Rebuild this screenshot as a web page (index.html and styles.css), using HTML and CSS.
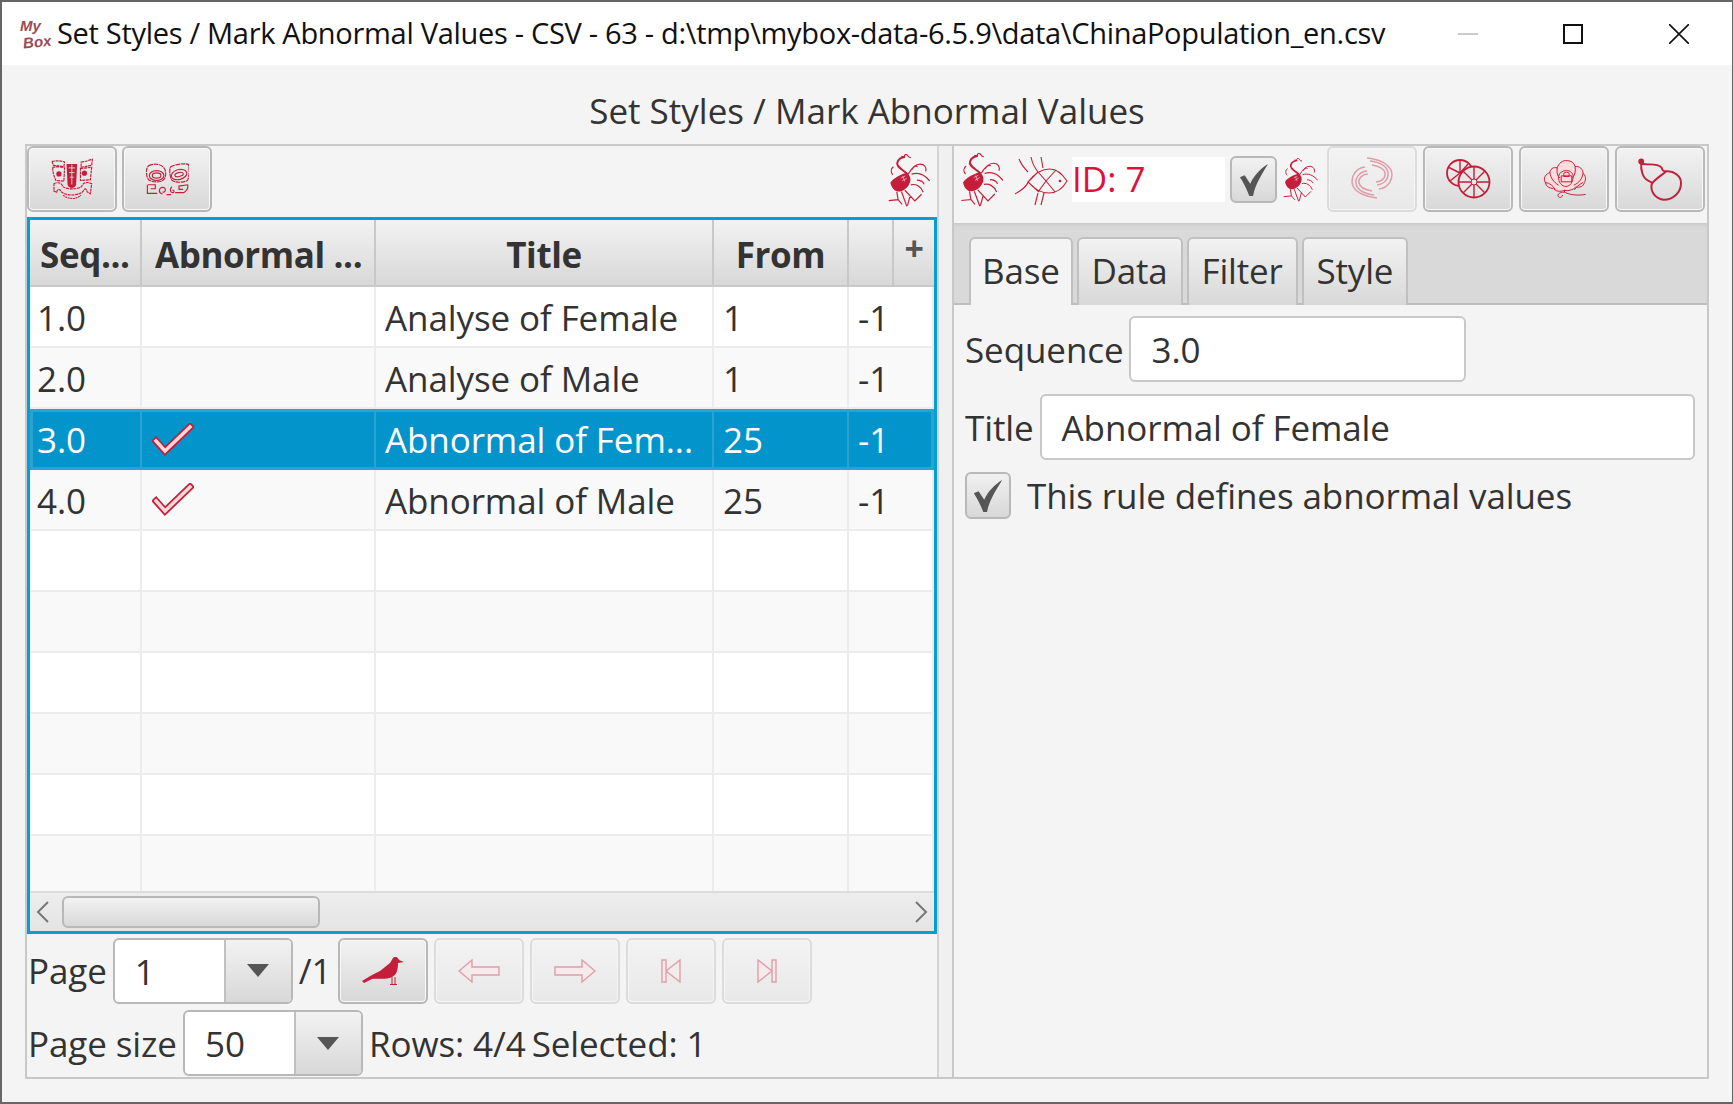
FILE: index.html
```html
<!DOCTYPE html>
<html lang="en">
<head>
	<meta charset="UTF-8">
	<title>Set Styles / Mark Abnormal Values</title>
	<link rel="stylesheet" href="styles.css">
</head>
<body>
<svg class="defs" width="0" height="0">
	<defs>
		<symbol id="i-phoenix" viewBox="0 0 125 158">
			<path d="M7 86C14 74 34 62 56 56c10 8 14 20 8 32-6 14-20 24-32 24-14 0-22-12-25-26z" fill="#c41e3a"/>
			<path d="M58 60C44 46 22 38 28 24c3-8 12-14 22-15" fill="none" stroke="#c41e3a" stroke-width="6"/>
			<path d="M38 72l14-7M42 80l14-8M44 66l6 16" stroke="#f6d5da" stroke-width="2" fill="none"/>
			<path d="M50 9c-3-6 2-9 6-7 5 3 3 8 12 9M50 9l-10-2M60 60c8-14 18-30 36-30 12 0 20 10 16 22M70 60c18-6 38 0 54 20M72 46c4-8 10-12 16-8M68 92c14-4 30 4 37 22M86 78c8 0 18 4 22 12M14 62C8 54 8 44 16 38M40 112l16 44M50 108l30 32 20-20M66 124l-8 30M26 112l4 24-28 3M30 136l12 14" fill="none" stroke="#c41e3a" stroke-width="3.500"/>
		</symbol>
		<symbol id="i-fish" viewBox="0 0 54 50">
			<path d="M14 26c6-8 13-13 22-13 7 0 13 6 17 12-4 7-10 12-18 12-8 0-15-4-21-11zM14 26l10-10M14 26l11 10M24 16l8 9-8 11M32 25l10-11M32 25l9 11M1 38c7-4 12-8 13-12M5 3c2 5 5 9 9 13M17 1c1 5 3 10 7 15M27 1l2 11M21 49c1-4 2-8 3-12M27 49l3-12" fill="none" stroke="#c41e3a" stroke-width="1.100"/>
			<circle cx="46" cy="25" r="1.300" fill="#c41e3a"/>
		</symbol>
		<symbol id="i-mask" viewBox="0 0 125 130">
			<path d="M46 18h32l-3 62c-2 14-24 14-26 0z" fill="#c41e3a"/>
			<path d="M52 30h20M54 44h16M56 58h12M62 20v60" stroke="#f1c6cc" stroke-width="3" fill="none"/>
			<path d="M2 10c12-2 26-2 38 2l-2 14-32-4zM90 12c12 0 24-6 34-8l-2 18-32 6zM4 28c10-2 28-2 36 2l-2 40-24-2C8 56 4 42 4 28zM88 32l34-4-4 38-30 2zM8 78c10-6 24-4 26 8 12 10 44 10 58 0 4-14 20-14 30-8l-4 30-10-6c-2-10-6-10-10-6-4 20-64 22-72 0-6-2-8 0-10 8l-8-4z" fill="none" stroke="#c41e3a" stroke-width="3.500" stroke-dasharray="9 2"/>
			<circle cx="23" cy="48" r="8" fill="#c41e3a"/>
			<circle cx="100" cy="46" r="8" fill="#c41e3a"/>
			<path d="M36 112c14 14 40 14 54 0" fill="none" stroke="#c41e3a" stroke-width="3.500" stroke-dasharray="6 2"/>
		</symbol>
		<symbol id="i-eyes" viewBox="0 0 130 100">
			<path d="M8 8C24 0 52 2 58 22c4 16 0 30-14 34-14 2-32 2-38-8C0 36-2 18 8 8zM74 12c14-8 40-12 54-8 4 18 4 40-4 50-14 6-36 6-46-2-6-12-8-30-4-40z" fill="none" stroke="#c41e3a" stroke-width="3.500" stroke-dasharray="14 2"/>
			<ellipse cx="32" cy="38" rx="22" ry="15" fill="none" stroke="#c41e3a" stroke-width="3.500"/>
			<ellipse cx="32" cy="38" rx="13" ry="8" fill="none" stroke="#c41e3a" stroke-width="3.500"/>
			<ellipse cx="100" cy="35" rx="24" ry="15" fill="none" stroke="#c41e3a" stroke-width="3.500" transform="rotate(-15 100 35)"/>
			<ellipse cx="100" cy="35" rx="13" ry="6" fill="none" stroke="#c41e3a" stroke-width="3.500" transform="rotate(-15 100 35)"/>
			<path d="M6 66h22v12H14M4 66v26h30M50 94c-14-2-12-22 2-20 10 2 8 16-2 14M62 96h14M78 72c-6 6-6 16 2 18 6 0 6-8 0-8M88 90h26c10-6 14-16 12-24l-26 4v10h12" fill="none" stroke="#c41e3a" stroke-width="3.500"/>
		</symbol>
		<symbol id="i-swirl" viewBox="0 0 44 44">
			<path d="M17 1c10 1 20 5 24 12 3 8-2 18-12 19M20 4c8 1 16 4 18 11 1 6-3 12-11 13M22 8c6 1 12 3 13 8 1 5-4 9-9 9M27 41C17 40 6 36 3 29c-3-8 2-18 12-19M24 38c-8-1-16-4-18-11-1-6 3-12 11-13M22 34c-6-1-12-3-13-8-1-5 4-9 9-9" fill="none" stroke="#c41e3a" stroke-width="1.500"/>
		</symbol>
		<symbol id="i-lotus" viewBox="0 0 46 40">
			<circle cx="15" cy="14" r="13" fill="none" stroke="#c41e3a" stroke-width="1.800"/>
			<path d="M15 14V1M15 14L3 8M15 14L5 22M15 14l8-9" stroke="#c41e3a" stroke-width="1.400"/>
			<circle cx="29" cy="23" r="15.500" fill="#e6e6e6" stroke="#c41e3a" stroke-width="1.800"/>
			<path d="M29 8v30M14 23h30M18 12l22 22M40 12L18 34" stroke="#c41e3a" stroke-width="1.400"/>
			<circle cx="29" cy="23" r="3" fill="#e6e6e6" stroke="#c41e3a"/>
		</symbol>
		<symbol id="i-peony" viewBox="0 0 133 122">
			<path d="M10 70c-8-14 2-26 14-30 0-10 10-18 22-14 4-14 16-24 30-22 12 0 22 6 24 18 14-2 24 8 24 20 8 6 10 20 4 28-2 12-14 16-26 14-8 8-20 12-34 10-12 4-26 4-34-6-12 0-22-6-24-18z" fill="#fcdcdc" stroke="#c41e3a" stroke-width="3"/>
			<path d="M46 26c-2 14 0 24 8 30M100 22c2 14 0 26-8 34M24 40c2 16 12 30 26 38M124 42c-2 16-12 30-28 36M50 52c2-12 12-18 24-18 12 0 20 8 20 18 0 16-8 30-22 30-12 0-24-14-22-30zM58 50h32v18H58zM66 42c4-4 12-4 16 0v10H66zM10 70c14 2 24 10 30 22M124 70c-12 6-20 14-26 22M68 92v8c-8-2-20 2-20 10 2 8 14 6 14-2M70 100c14 8 40 10 62 6" fill="none" stroke="#c41e3a" stroke-width="3"/>
		</symbol>
		<symbol id="i-gourd" viewBox="0 0 136 136">
			<circle cx="10" cy="14" r="9" fill="#c41e3a"/>
			<path d="M10 20c15 8 45-5 62 12 6 8 0 13 16 12 22-2 45 14 45 36 0 30-25 52-53 52-25-2-42-24-38-47 4-5 0-7-12-13C15 65 8 40 10 20zM42 85c6-14 28-26 46-41" fill="none" stroke="#c41e3a" stroke-width="6"/>
		</symbol>
		<symbol id="i-crow" viewBox="0 0 43 28">
			<path d="M0 24l10-6 8-4 10-8 3-5c2-2 5-1 6 2l5 2-6 1c0 6-1 12-6 14-6 3-14 1-20 2L2 26z" fill="#c41e3a"/>
			<path d="M30 20v8M33 20v8M28 27.500h7" stroke="#c41e3a" stroke-width="1" fill="none"/>
		</symbol>
		<symbol id="i-check" viewBox="0 0 42 33">
			<path d="M4 18l9 10L38 4" fill="none" stroke="#c41e3a" stroke-width="7" stroke-linecap="square" stroke-linejoin="miter"/>
			<path d="M4 18l9 10L38 4" fill="none" stroke="#fad6d6" stroke-width="3.500" stroke-linecap="square" stroke-linejoin="miter"/>
		</symbol>
		<symbol id="i-tick" viewBox="0 0 32 36">
			<path d="M1 15l5-2 6 9C16 13 23 6 31 1c-6 10-14 22-16 34h-4C8 27 5 21 1 15z" fill="#555"/>
		</symbol>
		<symbol id="i-left" viewBox="0 0 42 24">
			<path d="M1 12L14 1v7h27v8H14v7z" fill="#fbdcdc" stroke="#c41e3a" stroke-width="1.400"/>
		</symbol>
		<symbol id="i-first" viewBox="0 0 20 24">
			<path d="M1 1h4v22H1zM19 1v22L5 12z" fill="#fbdcdc" stroke="#c41e3a" stroke-width="1.400"/>
		</symbol>
	</defs>
</svg>
<div class="window">
	<!--title bar-->
	<div class="titlebar">
		<div class="logo"><span>My</span><span class="logo-box">Box</span></div>
		<div class="wintitle">Set Styles / Mark Abnormal Values - CSV - 63 - d:\tmp\mybox-data-6.5.9\data\ChinaPopulation_en.csv</div>
		<div class="winbtns">
			<div class="win-min"></div>
			<div class="win-max"></div>
			<svg class="win-close" width="20" height="20" viewBox="0 0 20 20"><path d="M0 0l20 20M20 0L0 20" stroke="#111" stroke-width="1.600"/></svg>
		</div>
	</div>
	<div class="heading">Set Styles / Mark Abnormal Values</div>

	<div class="split">
		<!--left side-->
		<div class="leftpane">
			<div class="lefttools">
				<div class="btn"><svg width="42" height="43"><use href="#i-mask"/></svg></div>
				<div class="btn"><svg width="43" height="33"><use href="#i-eyes"/></svg></div>
				<div class="spacer"></div>
				<svg class="bird-right" width="42" height="53"><use href="#i-phoenix"/></svg>
			</div>
			<div class="tablebox">
				<div class="thead">
					<div class="th c1 th-left">Seq...</div>
					<div class="th c2 th-left">Abnormal ...</div>
					<div class="th c3">Title</div>
					<div class="th c4">From</div>
					<div class="th c5"></div>
					<div class="th c6">+</div>
				</div>
				<div class="rows">
					<div class="row">
						<div class="td c1">1.0</div><div class="td c2"></div><div class="td c3">Analyse of Female</div><div class="td c4">1</div><div class="td c56">-1</div>
					</div>
					<div class="row alt">
						<div class="td c1">2.0</div><div class="td c2"></div><div class="td c3">Analyse of Male</div><div class="td c4">1</div><div class="td c56">-1</div>
					</div>
					<div class="row sel">
						<div class="td c1">3.0</div><div class="td c2"><svg width="42" height="33"><use href="#i-check"/></svg></div><div class="td c3">Abnormal of Fem...</div><div class="td c4">25</div><div class="td c56">-1</div>
					</div>
					<div class="row alt">
						<div class="td c1">4.0</div><div class="td c2"><svg width="42" height="33"><use href="#i-check"/></svg></div><div class="td c3">Abnormal of Male</div><div class="td c4">25</div><div class="td c56">-1</div>
					</div>
					<div class="row"><div class="td c1"></div><div class="td c2"></div><div class="td c3"></div><div class="td c4"></div><div class="td c56"></div></div>
					<div class="row alt"><div class="td c1"></div><div class="td c2"></div><div class="td c3"></div><div class="td c4"></div><div class="td c56"></div></div>
					<div class="row"><div class="td c1"></div><div class="td c2"></div><div class="td c3"></div><div class="td c4"></div><div class="td c56"></div></div>
					<div class="row alt"><div class="td c1"></div><div class="td c2"></div><div class="td c3"></div><div class="td c4"></div><div class="td c56"></div></div>
					<div class="row"><div class="td c1"></div><div class="td c2"></div><div class="td c3"></div><div class="td c4"></div><div class="td c56"></div></div>
					<div class="row alt"><div class="td c1"></div><div class="td c2"></div><div class="td c3"></div><div class="td c4"></div><div class="td c56"></div></div>
				</div>
				<div class="hscroll">
					<svg width="14" height="22" viewBox="0 0 14 22"><path d="M12 1L2 11l10 10" fill="none" stroke="#777" stroke-width="2"/></svg>
					<div class="thumb"></div>
					<div class="spacer"></div>
					<svg width="14" height="22" viewBox="0 0 14 22"><path d="M2 1l10 10L2 21" fill="none" stroke="#777" stroke-width="2"/></svg>
				</div>
			</div>
			<div class="pager">
				<span class="lbl">Page</span>
				<div class="combo"><div class="combo-val">1</div><div class="combo-arrow"><i></i></div></div>
				<span class="lbl page-of">/1</span>
				<div class="btn"><svg width="43" height="28"><use href="#i-crow"/></svg></div>
				<div class="btn off"><svg width="42" height="24"><use href="#i-left"/></svg></div>
				<div class="btn off"><svg class="flip" width="42" height="24"><use href="#i-left"/></svg></div>
				<div class="btn off"><svg width="20" height="24"><use href="#i-first"/></svg></div>
				<div class="btn off"><svg class="flip" width="20" height="24"><use href="#i-first"/></svg></div>
			</div>
			<div class="pager pager2">
				<span class="lbl">Page size</span>
				<div class="combo"><div class="combo-val">50</div><div class="combo-arrow"><i></i></div></div>
				<span class="lbl">Rows: 4/4</span>
				<span class="lbl">Selected: 1</span>
			</div>
		</div>

		<div class="divider"></div>

		<!--right side-->
		<div class="rightpane">
			<div class="righttools">
				<svg class="tool-ph" width="44" height="54"><use href="#i-phoenix"/></svg>
				<svg class="tool-fish" width="54" height="50"><use href="#i-fish"/></svg>
				<div class="idbox">ID: 7</div>
				<div class="tick-btn"><svg width="30" height="34"><use href="#i-tick"/></svg></div>
				<svg class="tool-ph2" width="35" height="44"><use href="#i-phoenix"/></svg>
				<div class="btn off"><svg width="44" height="44"><use href="#i-swirl"/></svg></div>
				<div class="btn tool-gap"><svg width="46" height="40"><use href="#i-lotus"/></svg></div>
				<div class="btn tool-gap"><svg width="44" height="41"><use href="#i-peony"/></svg></div>
				<div class="btn tool-gap"><svg width="44" height="44"><use href="#i-gourd"/></svg></div>
			</div>
			<div class="tabs">
				<div class="tab active">Base</div>
				<div class="tab">Data</div>
				<div class="tab">Filter</div>
				<div class="tab">Style</div>
			</div>
			<div class="form">
				<div class="formrow">
					<span class="lbl">Sequence</span>
					<div class="field field-seq">3.0</div>
				</div>
				<div class="formrow">
					<span class="lbl">Title</span>
					<div class="field field-title">Abnormal of Female</div>
				</div>
				<div class="formrow checkrow">
					<div class="checkbox"><svg width="32" height="34"><use href="#i-tick"/></svg></div>
					<span class="lbl">This rule defines abnormal values</span>
				</div>
			</div>
		</div>
	</div>
</div>
</body>
</html>
```

FILE: styles.css
```css
*{
	margin:0;
	padding:0;
	box-sizing:border-box;
}
html,body{
	width:1733px;
	height:1104px;
	overflow:hidden;
	background:#f4f4f4;
}
body{
	font-family:"Open Sans","Noto Sans",sans-serif;
	font-size:35px;
	color:#333;
}
.defs{
	display:block;
	height:0;
}
svg{
	flex:none;
	display:block;
}
.flip{
	transform:scaleX(-1);
}
.spacer{
	flex:1;
}

.window{
	width:1733px;
	height:1104px;
	border:2px solid #666;
	border-right-width:1px;
	background:#f4f4f4;
	display:flex;
	flex-direction:column;
}

/* title bar */
.titlebar{
	height:63px;
	background:#fff;
	display:flex;
	align-items:center;
	flex:none;
}
.logo{
	width:55px;
	padding-left:18px;
	font-family:"Liberation Sans",sans-serif;
	font-style:italic;
	font-weight:bold;
	font-size:15px;
	line-height:16px;
	color:#9b4a55;
}
.logo span{
	display:block;
}
.logo-box{
	padding-left:3px;
	transform:rotate(-6deg);
}
.wintitle{
	font-size:29px;
	letter-spacing:-0.3px;
	line-height:60px;
	padding-bottom:2px;
	color:#111;
	white-space:nowrap;
}
.winbtns{
	margin-left:auto;
	display:flex;
	align-items:center;
	padding-right:43px;
}
.win-min{
	width:20px;
	height:2px;
	background:#ccc;
	margin-right:85px;
}
.win-max{
	width:20px;
	height:20px;
	border:2px solid #111;
	margin-right:86px;
}

.heading{
	height:79px;
	flex:none;
	padding-top:14px;
	text-align:center;
	font-size:35px;
	line-height:64px;
}

/* split pane */
.split{
	width:1684px;
	height:935px;
	margin-left:23px;
	border:2px solid #c8c8c8;
	display:flex;
}
.leftpane{
	width:910px;
	flex:none;
	display:flex;
	flex-direction:column;
}
.divider{
	width:17px;
	flex:none;
	background:#f0f0f0;
	border-left:2px solid #d4d4d4;
	border-right:2px solid #c8c8c8;
}
.rightpane{
	flex:1;
	min-width:0;
	display:flex;
	flex-direction:column;
}

.btn{
	width:90px;
	height:66px;
	flex:none;
	border:2px solid #b8b8b8;
	border-radius:6px;
	background:linear-gradient(#f2f2f2,#d8d8d8);
	box-shadow:inset 0 0 0 1px #f8f8f8;
	display:flex;
	align-items:center;
	justify-content:center;
}
.btn.off{
	opacity:.4;
}

.lefttools{
	height:71px;
	flex:none;
	display:flex;
	gap:5px;
	align-items:flex-start;
}
.bird-right{
	margin:8px 7px 0 0;
}

/* table */
.tablebox{
	height:717px;
	flex:none;
	border:3px solid #039ed3;
	display:flex;
	flex-direction:column;
	background:#fff;
}
.thead{
	height:67px;
	flex:none;
	display:flex;
}
.th{
	height:100%;
	background:linear-gradient(#f2f2f2,#d8d8d8);
	border-right:2px solid #c8c8c8;
	border-bottom:2px solid #c8c8c8;
	font-weight:bold;
	font-size:35px;
	letter-spacing:-0.4px;
	text-align:center;
	line-height:70px;
	white-space:nowrap;
	color:#333;
}
.th-left{
	text-align:left;
	padding-left:10px;
}
.th-left.c2{
	padding-left:13px;
}
.c1{
	width:112px;
	flex:none;
}
.c2{
	width:234px;
	flex:none;
}
.c3{
	width:338px;
	flex:none;
}
.c4{
	width:135px;
	flex:none;
}
.c5{
	width:45px;
	flex:none;
}
.th.c6{
	flex:1;
	font-size:34px;
	line-height:56px;
	color:#555;
	border-right:none;
}
.c56{
	flex:1;
}
.rows{
	flex:1;
	overflow:hidden;
}
.row{
	height:61px;
	display:flex;
	background:#fff;
	border-bottom:2px solid #ececec;
}
.row.alt{
	background:#f9f9f9;
}
.row.sel{
	background:#0294ca;
	color:#fff;
	border:none;
	box-shadow:inset 0 0 0 3px #2aa3d2;
}
.td{
	height:100%;
	border-right:2px solid #ececec;
	padding:2px 0 0 9px;
	white-space:nowrap;
	overflow:hidden;
	font-size:35px;
	letter-spacing:-0.1px;
	display:flex;
	align-items:center;
}
.sel .td{
	padding-top:0;
	border-right-color:#2aa3d2;
}
.td.c1{
	padding-left:7px;
}
.td.c2{
	padding:0 0 0 10px;
}
.hscroll{
	height:40px;
	flex:none;
	border-top:2px solid #dcdcdc;
	background:linear-gradient(#ededed,#e4e4e4);
	display:flex;
	align-items:center;
	padding:0 6px;
}
.thumb{
	width:258px;
	height:32px;
	margin-left:12px;
	border:2px solid #b8b8b8;
	border-radius:6px;
	background:linear-gradient(#f2f2f2,#d8d8d8);
}

/* pager */
.pager{
	height:67px;
	flex:none;
	margin-top:3px;
	display:flex;
	align-items:center;
	gap:6px;
	padding-left:1px;
}
.pager2{
	height:66px;
	margin-top:6px;
}
.lbl{
	font-size:35px;
	letter-spacing:-0.1px;
	white-space:nowrap;
}
.page-of{
	margin-right:1px;
}
.combo{
	width:180px;
	height:66px;
	flex:none;
	border:2px solid #b8b8b8;
	border-radius:6px;
	background:#fff;
	display:flex;
	overflow:hidden;
}
.combo-val{
	flex:1;
	padding-left:20px;
	line-height:63px;
}
.combo-arrow{
	width:67px;
	border-left:2px solid #c0c0c0;
	background:linear-gradient(#f2f2f2,#d8d8d8);
	display:flex;
	align-items:center;
	justify-content:center;
}
.combo-arrow i{
	width:0;
	height:0;
	border-left:11px solid transparent;
	border-right:11px solid transparent;
	border-top:13px solid #555;
}

/* right side */
.righttools{
	height:77px;
	flex:none;
	display:flex;
	align-items:flex-start;
}
.tool-ph{
	margin:7px 0 0 6px;
}
.tool-fish{
	margin:10px 0 0 10px;
}
.idbox{
	width:153px;
	height:45px;
	margin:11px 0 0 4px;
	flex:none;
	background:#fff;
	color:#e0103a;
	font-size:35px;
	line-height:43px;
}
.tick-btn{
	width:47px;
	height:47px;
	flex:none;
	margin:10px 0 0 5px;
	border:2px solid #b8b8b8;
	border-radius:6px;
	background:linear-gradient(#f2f2f2,#d8d8d8);
	display:flex;
	align-items:center;
	justify-content:center;
}
.tool-ph2{
	margin:12px 9px 0 6px;
}
.tool-gap{
	margin-left:6px;
}

.tabs{
	height:82px;
	flex:none;
	background:#d9d9d9;
	border-bottom:2px solid #bdbdbd;
	box-shadow:inset 0 4px 4px -3px #c4c4c4;
	display:flex;
	align-items:flex-end;
	gap:4px;
	padding-left:15px;
}
.tab{
	height:68px;
	margin-bottom:-2px;
	padding:0 13px;
	border:2px solid #c0c0c0;
	border-bottom:none;
	border-radius:6px 6px 0 0;
	background:linear-gradient(#f2f2f2,#d8d8d8);
	font-size:35px;
	letter-spacing:-0.2px;
	line-height:64px;
}
.tab.active{
	padding:0 11px;
	background:#f4f4f4;
}

.form{
	padding:11px 12px 0 11px;
	display:flex;
	flex-direction:column;
	gap:12px;
}
.formrow{
	display:flex;
	align-items:center;
	gap:6px;
}
.field{
	height:66px;
	border:2px solid #c8c8c8;
	border-radius:6px;
	background:#fff;
	padding-left:20px;
	line-height:63px;
	font-size:35px;
	letter-spacing:-0.1px;
}
.field-seq{
	width:337px;
}
.field-title{
	flex:1;
}
.checkrow{
	gap:16px;
}
.checkbox{
	width:46px;
	height:47px;
	flex:none;
	border:2px solid #b8b8b8;
	border-radius:6px;
	background:linear-gradient(#f0f0f0,#d8d8d8);
	display:flex;
	align-items:center;
	justify-content:center;
}
```
